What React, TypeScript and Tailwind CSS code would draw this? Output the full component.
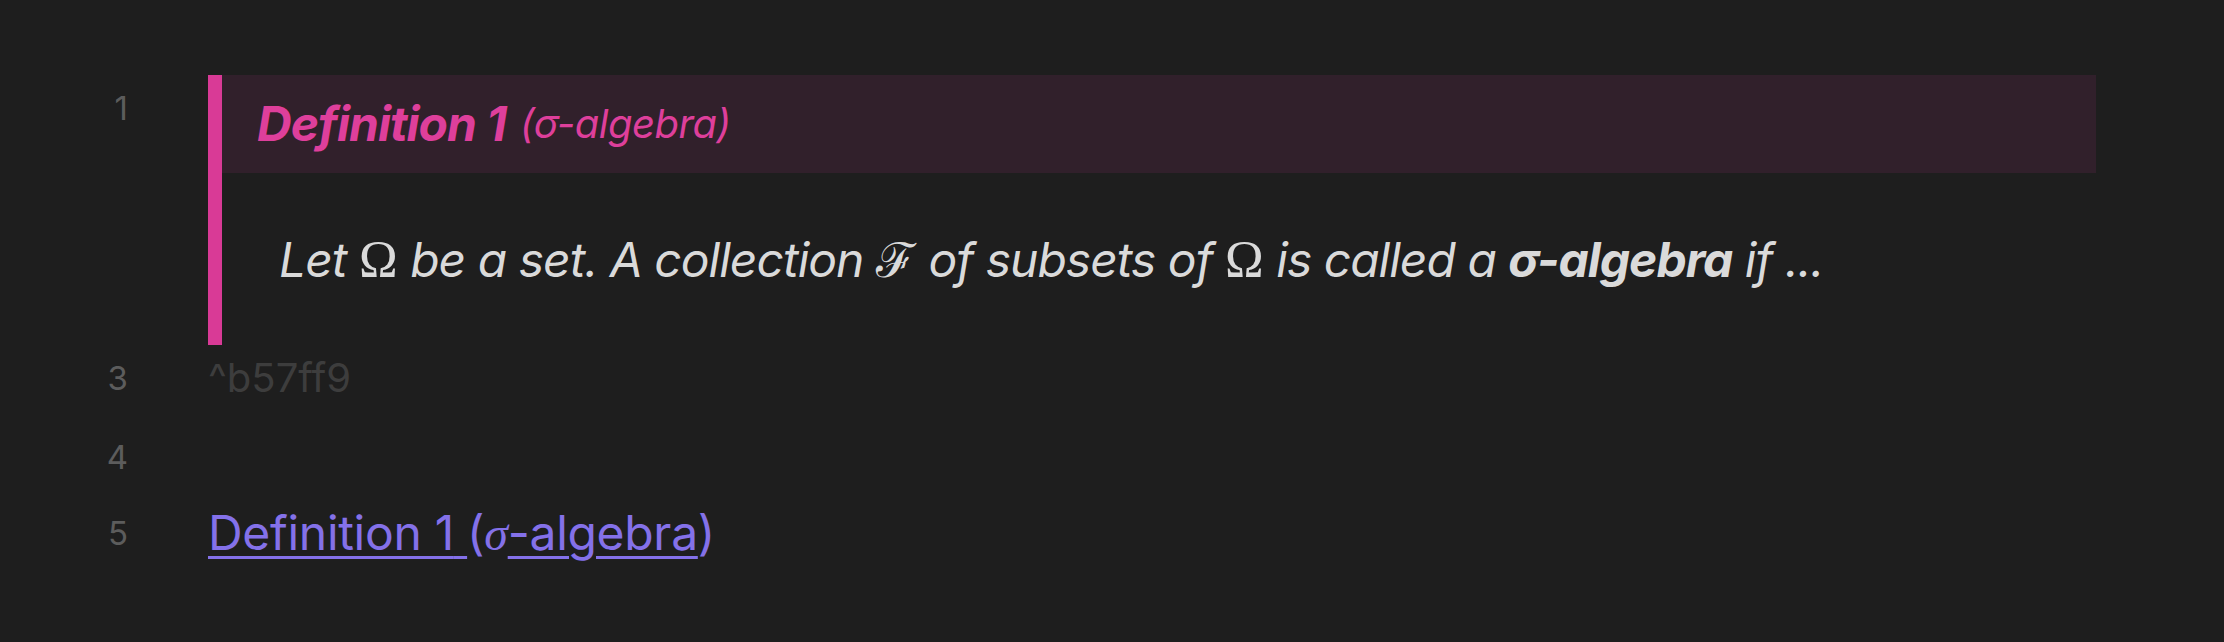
const pink = "text-[#de3f9b]";

function Num({ n, className = "" }: { n?: number; className?: string }) {
  return (
    <div
      className={`w-[128px] shrink-0 text-right text-[33px] text-[#5c5c5c] ${className}`}
    >
      {n}
    </div>
  );
}

const math = "font-['Liberation_Serif',serif] not-italic font-normal tracking-normal text-[52px]";

export default function App() {
  return (
    <div className="min-h-[642px] w-[2224px] bg-[#1e1e1e] pt-[75px] font-['Inter','Noto_Sans',sans-serif] text-[#dadada]">
      {/* line 1: callout */}
      <div className="flex">
        <Num n={1} className="leading-[66px]" />
        <div className="ml-[80px] mr-[128px] flex flex-1">
          <div className="w-[14px] shrink-0 bg-[#d93a96]" />
          <div className="flex-1">
            <div className="flex h-[98px] items-center bg-[#31202b] pl-[35px]">
              <span className={`text-[48px] font-bold italic tracking-[-1px] ${pink}`}>
                Definition 1
              </span>
              <span className={`ml-[14px] text-[40px] italic tracking-[-0.5px] ${pink}`}>
                (σ-algebra)
              </span>
            </div>
            <div className="pb-[49px] pl-[57px] pt-[51px] text-[48px] italic leading-[72px] tracking-[-1px]">
              Let <span className={math}>Ω</span> be a set. A collection{" "}
              <span className="font-['DejaVu_Serif',serif] not-italic tracking-normal">ℱ</span> of subsets of{" "}
              <span className={math}>Ω</span> is called a{" "}
              <b className="font-bold">σ-algebra</b> if ...
            </div>
          </div>
        </div>
      </div>

      {/* line 3: block id */}
      <div className="flex h-[74px] items-start">
        <Num n={3} className="leading-[66px]" />
        <div className="ml-[80px] text-[40px] leading-[66px] text-[#3d3d3d]">^b57ff9</div>
      </div>

      {/* line 4 */}
      <div className="flex h-[76px]">
        <Num n={4} className="leading-[76px]" />
      </div>

      {/* line 5: link */}
      <div className="flex h-[76px]">
        <Num n={5} className="leading-[76px]" />
        <div className="ml-[80px] text-[48px] leading-[76px] tracking-[-0.3px] text-[#8471e9]">
          <span className="underline decoration-[3px] underline-offset-[6px]">
            Definition 1{" "}
            <span className="inline-block no-underline">
              (<span className="font-['Liberation_Serif',serif] italic">σ</span>
            </span>
            -algebra
            <span className="inline-block">)</span>
            <span className="text-[16px]"> </span>
          </span>
        </div>
      </div>
    </div>
  );
}
